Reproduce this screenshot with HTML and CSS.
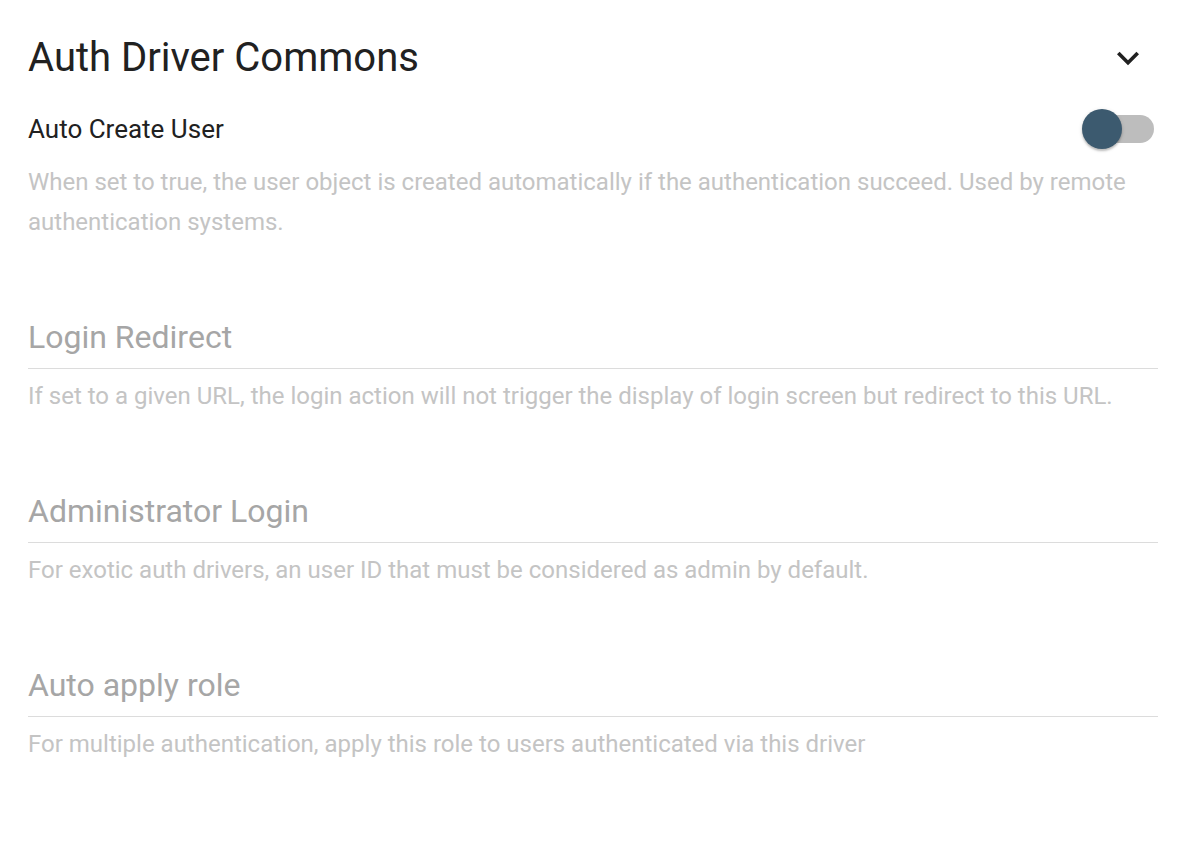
FILE: index.html
```html
<!DOCTYPE html>
<html>
<head>
<meta charset="utf-8">
<link rel="stylesheet" href="styles.css">
</head>
<body>
<div class="panel">
  <div class="header">
    <h1 class="title">Auth Driver Commons</h1>
    <svg class="chevron" viewBox="0 0 24 24" width="44" height="44"><path d="M16.59 8.59 12 13.17 7.41 8.59 6 10l6 6 6-6z" fill="#212121"/></svg>
  </div>
  <div class="switch-row">
    <span class="switch-label">Auto Create User</span>
    <span class="switch"><span class="track"></span><span class="thumb"></span></span>
  </div>
  <p class="desc">When set to true, the user object is created automatically if the authentication succeed. Used by remote authentication systems.</p>

  <div class="field first">
    <div class="input">Login Redirect</div>
    <div class="helper">If set to a given URL, the login action will not trigger the display of login screen but redirect to this URL.</div>
  </div>
  <div class="field">
    <div class="input">Administrator Login</div>
    <div class="helper">For exotic auth drivers, an user ID that must be considered as admin by default.</div>
  </div>
  <div class="field">
    <div class="input">Auto apply role</div>
    <div class="helper">For multiple authentication, apply this role to users authenticated via this driver</div>
  </div>
</div>
</body>
</html>
```
FILE: styles.css
```css
html, body {
  margin: 0;
  padding: 0;
  background: #ffffff;
}
body {
  font-family: Roboto, "Liberation Sans", sans-serif;
}
.panel {
  width: 1130px;
  padding: 34px 0 0 28px;
}
.header {
  display: flex;
  align-items: center;
  justify-content: space-between;
  height: 48px;
}
.title {
  margin: 0;
  font-size: 40px;
  line-height: 48px;
  font-weight: 400;
  color: #212121;
}
.chevron {
  margin-right: 8px;
  display: block;
}
.switch-row {
  display: flex;
  align-items: center;
  justify-content: space-between;
  height: 40px;
  margin-top: 27px;
}
.switch-label {
  font-size: 26px;
  color: #212121;
}
.switch {
  position: relative;
  width: 72px;
  height: 40px;
  margin-right: 4px;
}
.track {
  position: absolute;
  left: 4px;
  right: 0;
  top: 6px;
  height: 28px;
  border-radius: 14px;
  background: #bdbdbd;
}
.thumb {
  position: absolute;
  left: 0;
  top: 0;
  width: 40px;
  height: 40px;
  border-radius: 50%;
  background: #3c5a6f;
  box-shadow: 0 2px 2px rgba(0,0,0,0.2), 0 1px 4px rgba(0,0,0,0.12);
}
.desc {
  margin: 13px 0 0 0;
  font-size: 24px;
  line-height: 40px;
  color: #c4c4c4;
}
.field {
  margin-top: 81px;
}
.field.first {
  margin-top: 75px;
}
.input {
  font-size: 32px;
  line-height: 40px;
  color: #a6a6a6;
  padding-bottom: 11px;
  border-bottom: 1px solid #dcdcdc;
}
.helper {
  margin-top: 13px;
  font-size: 24px;
  line-height: 28px;
  color: #c4c4c4;
}
```
